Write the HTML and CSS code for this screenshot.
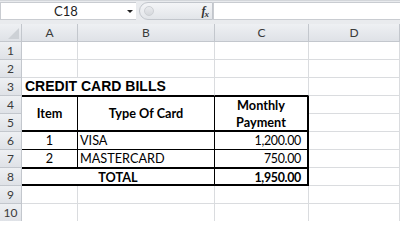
FILE: index.html
```html
<!DOCTYPE html>
<html>
<head>
<meta charset="utf-8">
<link rel="stylesheet" href="styles.css">
</head>
<body>
<div class="app">
  <div class="fbar">
    <div class="namebox"><span class="ref">C18</span><span class="caret"></span></div>
    <div class="pill"><span class="knob"></span><span class="fx">f<span class="sub">x</span></span></div>
    <div class="input"></div>
  </div>
  <div class="strip"></div>
  <div class="sheet">
    <div class="hd corner"><span class="tri"></span></div><div class="hd">A</div><div class="hd">B</div><div class="hd">C</div><div class="hd">D</div>

    <div class="hd">1</div><div class="cell"></div><div class="cell"></div><div class="cell"></div><div class="cell"></div>
    <div class="hd">2</div><div class="cell"></div><div class="cell"></div><div class="cell"></div><div class="cell"></div>
    <div class="hd">3</div><div class="cell title span2 bot-line">CREDIT CARD BILLS</div><div class="cell bot-line"></div><div class="cell"></div>

    <div class="hd">4</div>
    <div class="cell head rows2 top-line bot-k right-t">Item</div>
    <div class="cell head rows2 top-line bot-k right-t">Type Of Card</div>
    <div class="cell head rows2 top-line bot-k right-k"><span>Monthly</span><span>Payment</span></div>
    <div class="cell"></div>
    <div class="hd">5</div><div class="cell"></div>

    <div class="hd">6</div><div class="cell ctr right-t bot-t">1</div><div class="cell right-t bot-t">VISA</div><div class="cell num right-k bot-t">1,200.00</div><div class="cell"></div>
    <div class="hd">7</div><div class="cell ctr right-t bot-t">2</div><div class="cell right-t bot-t">MASTERCARD</div><div class="cell num right-k bot-t">750.00</div><div class="cell"></div>
    <div class="hd">8</div><div class="cell b ctr span2 top-line right-t bot-k">TOTAL</div><div class="cell b num top-line right-k bot-k">1,950.00</div><div class="cell"></div>

    <div class="hd">9</div><div class="cell"></div><div class="cell"></div><div class="cell"></div><div class="cell"></div>
    <div class="hd">10</div><div class="cell"></div><div class="cell"></div><div class="cell"></div><div class="cell"></div>
  </div>
</div>
</body>
</html>
```
FILE: styles.css
```css
html, body {
  margin: 0;
  padding: 0;
  background: #ffffff;
}
.app {
  width: 400px;
  height: 221px;
  overflow: hidden;
  background: #ffffff;
}
.fbar {
  display: flex;
  height: 21px;
  box-sizing: border-box;
  border-top: 1px solid #d3d6da;
  padding-top: 1px;
  background: #e9ebee;
}
.namebox {
  width: 136px;
  height: 18px;
  box-sizing: border-box;
  background: #ffffff;
  border: 1px solid #c9ccd1;
  border-right: none;
  display: flex;
  align-items: center;
}
.ref {
  flex: 1;
  text-align: center;
  font-family: Lato, "Liberation Sans", sans-serif;
  font-size: 13px;
  color: #1e1e1e;
  padding-left: 4px;
}
.caret {
  width: 0;
  height: 0;
  border-left: 3px solid transparent;
  border-right: 3px solid transparent;
  border-top: 3px solid #222;
  margin-right: 3px;
}
.pill {
  width: 74px;
  height: 18px;
  box-sizing: border-box;
  margin-left: 3px;
  border: 1px solid #c2c6cc;
  border-radius: 9px 0 0 9px;
  background: linear-gradient(#f4f5f7, #e2e5e9);
  display: flex;
  align-items: center;
  justify-content: space-between;
  padding: 0 4px;
}
.knob {
  width: 8px;
  height: 8px;
  border-radius: 50%;
  background: linear-gradient(#e9ebee, #d5d8dc);
  border: 1px solid #cdd0d4;
}
.fx {
  font-family: "Liberation Serif", serif;
  font-style: italic;
  font-weight: bold;
  font-size: 12px;
  color: #333;
  letter-spacing: -1px;
}
.fx .sub {
  font-size: 9px;
  position: relative;
  top: 2px;
}
.input {
  flex: 1;
  height: 18px;
  box-sizing: border-box;
  background: #ffffff;
  border: 1px solid #c9ccd1;
  border-right: none;
}
.strip {
  height: 3px;
  background: #e9ebee;
}
.sheet {
  display: grid;
  grid-template-columns: 22px 56px 137px 94px 91px;
  grid-auto-rows: 18px;
  font-family: Lato, "Liberation Sans", sans-serif;
  font-size: 12.7px;
  color: #000;
}
.hd {
  box-sizing: border-box;
  background: linear-gradient(#eef0f3, #dfe2e7);
  border-right: 1px solid #c3c7cd;
  border-bottom: 1px solid #c3c7cd;
  font-size: 12px;
  color: #3a3a3a;
  text-align: center;
  line-height: 17px;
  white-space: nowrap;
}
.corner {
  position: relative;
}
.tri {
  position: absolute;
  right: 2px;
  bottom: 2px;
  width: 0;
  height: 0;
  border-left: 11px solid transparent;
  border-bottom: 11px solid #cdd1d6;
}
.cell {
  box-sizing: border-box;
  border-right: 1px solid #dadcdf;
  border-bottom: 1px solid #dadcdf;
  padding: 0 2px;
  line-height: 17px;
  white-space: nowrap;
  overflow: hidden;
}
.span2 { grid-column: span 2; }
.rows2 { grid-row: span 2; }
.title {
  font-family: "Liberation Sans", Arial, sans-serif;
  font-weight: bold;
  font-size: 14px;
  padding-left: 3px;
}
.head {
  font-weight: bold;
  display: flex;
  flex-direction: column;
  align-items: center;
  justify-content: center;
  line-height: 17px;
}
.b { font-weight: bold; }
.ctr { text-align: center; }
.num {
  text-align: right;
  padding-right: 6px;
  font-size: 12.4px;
  letter-spacing: -0.3px;
}
.cell.bot-line { border-bottom: 1px solid #000; }
.cell.top-line { border-top: 1px solid #000; }
.cell.bot-k { border-bottom: 2px solid #000; }
.cell.bot-t { border-bottom: 1px solid #000; }
.cell.right-t { border-right: 1px solid #000; }
.cell.right-k { border-right: 2px solid #000; }
```
